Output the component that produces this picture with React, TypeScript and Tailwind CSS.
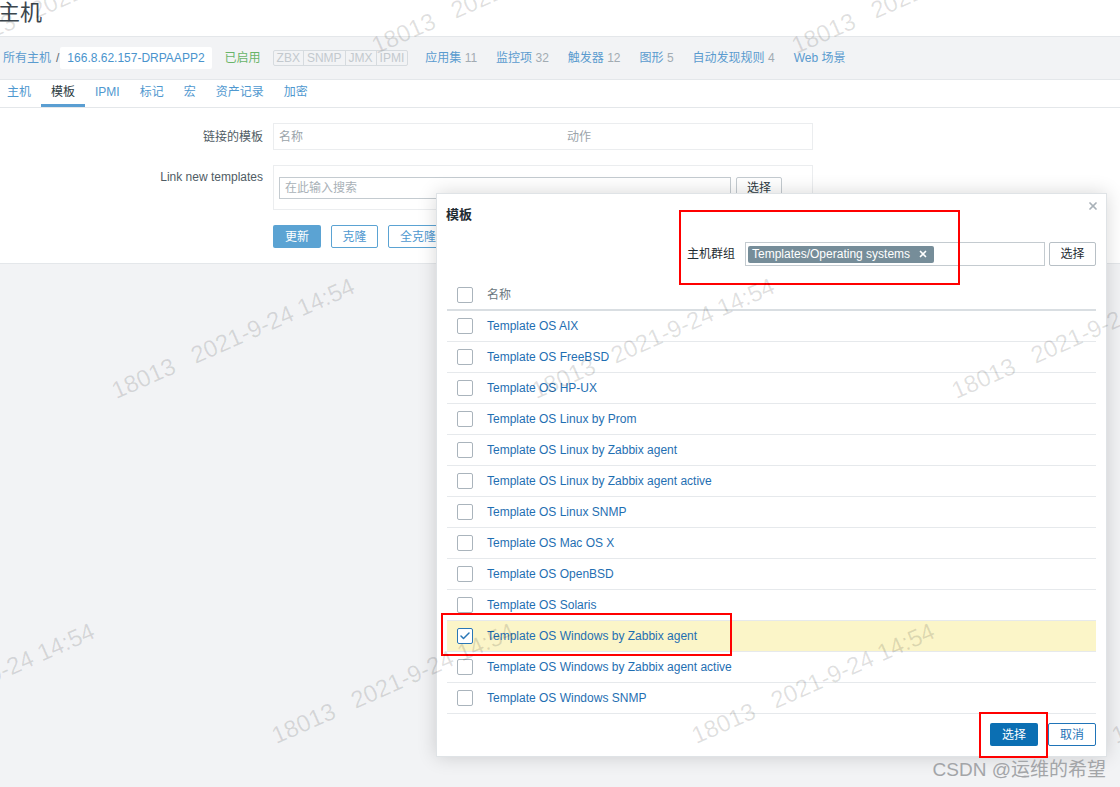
import { X, Check } from "lucide-react"

const font = "font-['Liberation_Sans','Noto_Sans_CJK_SC',sans-serif]"

const templates = [
    "Template OS AIX",
    "Template OS FreeBSD",
    "Template OS HP-UX",
    "Template OS Linux by Prom",
    "Template OS Linux by Zabbix agent",
    "Template OS Linux by Zabbix agent active",
    "Template OS Linux SNMP",
    "Template OS Mac OS X",
    "Template OS OpenBSD",
    "Template OS Solaris",
    "Template OS Windows by Zabbix agent",
    "Template OS Windows by Zabbix agent active",
    "Template OS Windows SNMP",
]

const headerLinks: [string, string][] = [
    ["应用集", "11"],
    ["监控项", "32"],
    ["触发器", "12"],
    ["图形", "5"],
    ["自动发现规则", "4"],
    ["Web 场景", ""],
]

const tabs = ["主机", "模板", "IPMI", "标记", "宏", "资产记录", "加密"]

function Box({ checked }: { checked?: boolean }) {
    return (
        <span className={`w-4 h-4 shrink-0 rounded-[2px] border bg-white flex items-center justify-center ${checked ? "border-[#2a77b6]" : "border-[#aab4bc]"}`}>
            {checked && <Check size={12} strokeWidth={3} className="text-[#2a77b6]" />}
        </span>
    )
}

function Watermarks() {
    const marks: { x: number; y: number }[] = []
    for (let r = 0; r < 3; r++)
        for (let c = -1; c < 3; c++) marks.push({ x: -42 + r * 160 + c * 420, y: 58 + r * 345 })
    return (
        <div className="absolute inset-0 overflow-hidden pointer-events-none">
            {marks.map((m, i) => (
                <div
                    key={i}
                    className="absolute origin-bottom-left -rotate-[24deg] whitespace-pre text-[24px] leading-none text-black/[0.12] font-['Liberation_Sans',sans-serif]"
                    style={{ left: m.x, top: m.y - 24 }}
                >
                    18013   2021-9-24 14:54
                </div>
            ))}
        </div>
    )
}

function TemplateModal() {
    return (
        <div className="absolute left-[436px] top-[193px] w-[671px] h-[564px] bg-white border border-[#dfe3e6] shadow-[0_0_18px_rgba(0,0,0,0.16)] px-[10px] flex flex-col">
            <button className="absolute top-[6px] right-[7px] text-[#a9b1b8]">
                <X size={12} strokeWidth={3.5} />
            </button>
            <div className="pt-[13px] -ml-[1px] text-[13px] font-bold text-[#1f2c33] leading-[16px]">模板</div>
            <div className="mt-[19px] flex items-center justify-end h-[24px]">
                <span className="text-[12px] text-[#1f2c33]">主机群组</span>
                <div className="ml-[10px] w-[300px] h-[24px] border border-[#c4cbd0] flex items-center px-[2px]">
                    <span className="h-[17px] bg-[#768d99] rounded-[2px] text-white text-[12px] flex items-center pl-[4px] pr-[6px] gap-[8px]">
                        Templates/Operating systems
                        <X size={10} strokeWidth={4} />
                    </span>
                </div>
                <button className="ml-[4px] w-[47px] h-[24px] border border-[#b8c0c6] rounded-[2px] text-[12px] text-[#1f2c33] bg-white">选择</button>
            </div>
            <div className="mt-[15px]">
                <div className="h-[30px] flex items-center pl-[10px] gap-[14px] border-b-2 border-[#d9dee2]">
                    <Box />
                    <span className="text-[12px] text-[#6b7780]">名称</span>
                </div>
                {templates.map((t, i) => (
                    <div
                        key={t}
                        className={`h-[31px] flex items-center pl-[10px] gap-[14px] border-b border-[#e6e9ec] ${i === 10 ? "bg-[#fbf5c8]" : ""}`}
                    >
                        <Box checked={i === 10} />
                        <span className="text-[12px] text-[#1f6fb2]">{t}</span>
                    </div>
                ))}
            </div>
            <div className="mt-[9px] flex justify-end gap-[10px]">
                <button className="w-[48px] h-[23px] rounded-[2px] bg-[#0b6fb3] text-white text-[12px]">选择</button>
                <button className="w-[48px] h-[23px] rounded-[2px] border border-[#1f74b8] bg-white text-[#1f74b8] text-[12px]">取消</button>
            </div>
        </div>
    )
}

export default function App() {
    return (
        <div className={`relative w-[1120px] h-[787px] overflow-hidden bg-[#f2f3f5] ${font}`}>
            <div className="bg-white border-b border-[#e4e7ea]">
                <div className="h-[36px] pt-[1px] text-[22px] leading-[24px] text-[#3b464d] -ml-[2px]">主机</div>
                <div className="h-[44px] bg-[#f2f3f5] border-y border-[#e4e7ea] flex items-center pl-[3px] text-[12px]">
                    <span className="text-[#5a9bcf]">所有主机</span>
                    <span className="ml-[5px] mr-[1px] text-[#5d6a73]">/</span>
                    <span className="h-[22px] bg-white rounded-[2px] px-[7px] flex items-center text-[#4a94cd]">166.8.62.157-DRPAAPP2</span>
                    <span className="ml-[13px] text-[#69b569]">已启用</span>
                    <div className="ml-[12px] h-[16px] flex border border-[#d6dbdf] rounded-[2px] text-[#c3c9ce] leading-[14px]">
                        <span className="px-[3px]">ZBX</span>
                        <span className="px-[3px] border-l border-[#d6dbdf]">SNMP</span>
                        <span className="px-[3px] border-l border-[#d6dbdf]">JMX</span>
                        <span className="px-[3px] border-l border-[#d6dbdf]">IPMI</span>
                    </div>
                    <div className="ml-[17px] flex gap-[19px]">
                        {headerLinks.map(([l, n]) => (
                            <span key={l} className="text-[#5a9bcf]">
                                {l}
                                {n && <span className="text-[#a2abb2]"> {n}</span>}
                            </span>
                        ))}
                    </div>
                </div>
                <div className="h-[28px] flex -ml-[3px] border-b border-[#e4e7ea] text-[12px]">
                    {tabs.map((t) => (
                        <span
                            key={t}
                            className={`px-[10px] pt-[3px] ${t === "模板" ? "text-[#2c3a42] border-b-[3px] border-[#5a9ed2]" : "text-[#4f98cf]"}`}
                        >
                            {t}
                        </span>
                    ))}
                </div>
                <div className="pt-[15px] pb-[15px] grid grid-cols-[263px_540px] gap-x-[10px] gap-y-[15px] text-[12px]">
                    <div className="text-right pt-[5px] text-[#505c64]">链接的模板</div>
                    <div className="h-[27px] border border-[#ebedef] flex items-center pl-[5px] text-[#9ba4aa]">
                        <span className="w-[288px]">名称</span>
                        <span>动作</span>
                    </div>
                    <div className="text-right pt-[3px] text-[#505c64]">Link new templates</div>
                    <div className="h-[45px] border border-[#ebedef] pl-[5px] pt-[11px] flex gap-[5px]">
                        <div className="w-[452px] h-[22px] border border-[#c4cbd0] flex items-center pl-[5px] text-[#a9b1b7]">在此输入搜索</div>
                        <button className="w-[46px] h-[21px] border border-[#c4cbd0] rounded-[2px] text-[#2c3a42]">选择</button>
                    </div>
                    <div />
                    <div className="flex gap-[10px]">
                        <button className="w-[48px] h-[23px] rounded-[2px] bg-[#5ba3d3] text-white">更新</button>
                        <button className="w-[47px] h-[23px] rounded-[2px] border border-[#5ba3d3] text-[#4f98cf]">克隆</button>
                        <button className="w-[60px] h-[23px] rounded-[2px] border border-[#5ba3d3] text-[#4f98cf]">全克隆</button>
                    </div>
                </div>
            </div>

            <TemplateModal />

            <div className="absolute left-[679px] top-[210px] w-[281px] h-[75px] border-2 border-[#f00]" />
            <div className="absolute left-[441px] top-[613px] w-[291px] h-[43px] border-2 border-[#f00]" />
            <div className="absolute left-[979px] top-[712px] w-[69px] h-[46px] border-2 border-[#f00]" />

            <Watermarks />

            <div className="absolute right-[14px] bottom-[5px] text-[19px] leading-[24px] text-[#a3a5a8]">CSDN @运维的希望</div>
        </div>
    )
}
